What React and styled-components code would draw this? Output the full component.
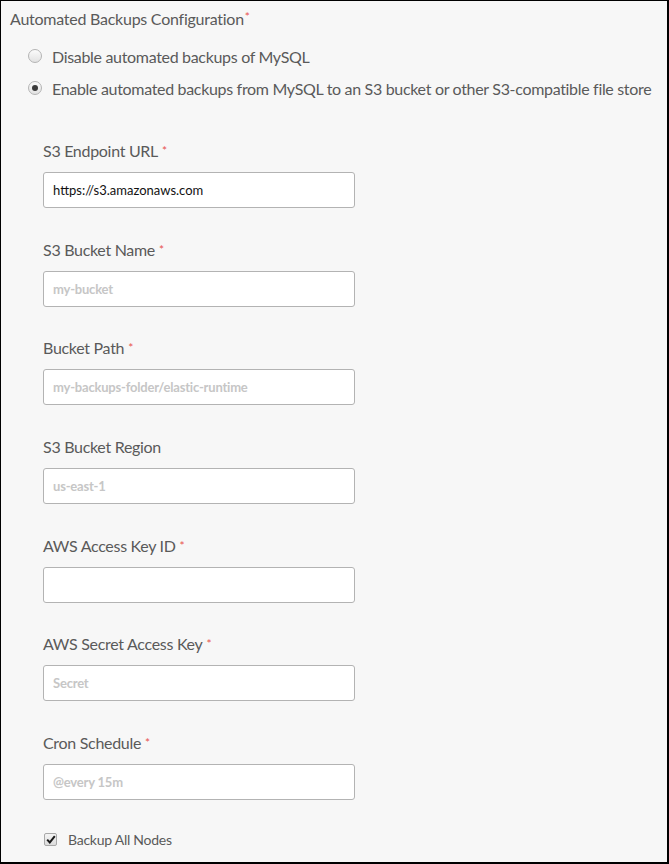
import * as React from "react"
import styled, { createGlobalStyle } from "styled-components"

const GlobalStyle = createGlobalStyle`
    html, body {
        margin: 0;
        padding: 0;
        background: #ffffff;
    }
    * {
        box-sizing: border-box;
    }
`

const Frame = styled.div`
    width: 669px;
    height: 864px;
    background: #f7f7f7;
    border-top: 1px solid #000;
    border-left: 1px solid #000;
    border-right: 2px solid #000;
    border-bottom: 2px solid #000;
    font-family: Lato, "Open Sans", sans-serif;
    color: #5a5a5a;
    overflow: hidden;
`

const Title = styled.div`
    margin-top: 6px;
    padding-left: 9px;
    font-size: 16px;
    line-height: 20px;
    letter-spacing: -0.25px;
`

const Star = styled.span`
    color: #e8534f;
    font-size: 12px;
    margin-left: ${p => (p.$sup ? "1px" : "4px")};
    vertical-align: ${p => (p.$sup ? "4px" : "2px")};
`

const RadioList = styled.div`
    margin-top: 11px;
    padding-left: 27px;
`

const RadioRow = styled.label`
    display: flex;
    align-items: center;
    height: 32px;
    font-size: 16px;
    gap: 10px;
    white-space: nowrap;
    letter-spacing: -0.32px;
`

const RadioDot = styled.span`
    width: 14px;
    height: 14px;
    border-radius: 50%;
    border: 1px solid #b4b4b4;
    background: linear-gradient(#fbfbfb, #e2e2e2);
    display: flex;
    align-items: center;
    justify-content: center;
    flex-shrink: 0;

    &::after {
        content: "";
        width: 6px;
        height: 6px;
        border-radius: 50%;
        background: #3a3a3a;
        display: ${p => (p.$checked ? "block" : "none")};
    }
`

const Fields = styled.div`
    margin-top: 37px;
    padding-left: 42px;
`

const Field = styled.div`
    margin-bottom: 31.7px;
`

const Label = styled.div`
    font-size: 16px;
    line-height: 20px;
    margin-bottom: 11px;
    letter-spacing: -0.3px;
`

const Input = styled.input`
    display: block;
    width: 312px;
    height: 36px;
    border: 1px solid #b3b3b3;
    border-radius: 3px;
    background: #fff;
    padding: 0 9px;
    font-family: Lato, sans-serif;
    font-size: 13px;
    color: #111;
    outline: none;

    &::placeholder {
        color: #c6c6c6;
        font-weight: 700;
        letter-spacing: -0.2px;
    }
`

const CheckRow = styled.label`
    display: flex;
    align-items: center;
    gap: 11px;
    height: 20px;
    margin-top: -2.5px;
    padding-left: 1px;
    font-size: 14px;
    letter-spacing: -0.25px;
`

const CheckBox = styled.span`
    width: 13px;
    height: 13px;
    border: 1px solid #a8a8a8;
    border-radius: 2px;
    background: linear-gradient(#f4f4f4, #dcdcdc);
    display: flex;
    align-items: center;
    justify-content: center;
`

const fields = [
    { label: "S3 Endpoint URL", required: true, value: "https://s3.amazonaws.com" },
    { label: "S3 Bucket Name", required: true, placeholder: "my-bucket" },
    { label: "Bucket Path", required: true, placeholder: "my-backups-folder/elastic-runtime" },
    { label: "S3 Bucket Region", placeholder: "us-east-1" },
    { label: "AWS Access Key ID", required: true },
    { label: "AWS Secret Access Key", required: true, placeholder: "Secret" },
    { label: "Cron Schedule", required: true, placeholder: "@every 15m" },
]

const App = () => {
    return (
        <>
            <GlobalStyle />
            <Frame>
                <Title>
                    Automated Backups Configuration<Star $sup>*</Star>
                </Title>
                <RadioList>
                    <RadioRow>
                        <RadioDot />
                        Disable automated backups of MySQL
                    </RadioRow>
                    <RadioRow>
                        <RadioDot $checked />
                        Enable automated backups from MySQL to an S3 bucket or other S3-compatible file store
                    </RadioRow>
                </RadioList>
                <Fields>
                    {fields.map(f => (
                        <Field key={f.label}>
                            <Label>
                                {f.label}
                                {f.required && <Star>*</Star>}
                            </Label>
                            <Input
                                defaultValue={f.value}
                                placeholder={f.placeholder}
                                readOnly
                            />
                        </Field>
                    ))}
                    <CheckRow>
                        <CheckBox>
                            <svg width="10" height="9" viewBox="0 0 10 9">
                                <path d="M1.2 4.6 L3.8 7.4 L8.8 1.2" fill="none" stroke="#1a1a1a" strokeWidth="2" />
                            </svg>
                        </CheckBox>
                        Backup All Nodes
                    </CheckRow>
                </Fields>
            </Frame>
        </>
    )
}

export default App
